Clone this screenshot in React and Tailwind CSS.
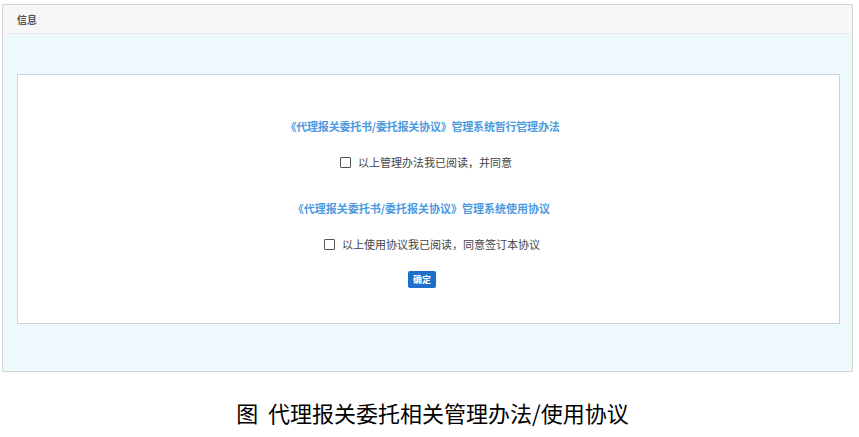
export default function App() {
  const font = { fontFamily: '"Noto Sans CJK SC", "Noto Sans", sans-serif' };
  return (
    <div className="w-[859px] h-[437px] bg-white flex flex-col" style={font}>
      <div className="ml-[2px] mt-[4px] w-[851px] h-[368px] border border-[#d4d4d4] flex flex-col">
        <div className="h-[29px] bg-[#f7f7f7] border-b border-[#ececec] flex items-center pl-[14px]">
          <span className="text-[10px] font-bold text-[#555]">信息</span>
        </div>
        <div className="flex-1 bg-[#eef9fe] pt-[40px] pl-[14px] pr-[12px]">
          <div className="h-[250px] bg-white border border-[#cfd4d8] flex flex-col items-center pt-[43px]">
            <div className="text-[11px] leading-[16px] font-bold text-[#4d9ae0] ml-[-12px] tracking-[-0.2px]">
              《代理报关委托书/委托报关协议》管理系统暂行管理办法
            </div>
            <label className="mt-[20px] flex items-center gap-[7px] text-[11px] leading-[16px] text-[#444] ml-[-5px]">
              <span className="w-[11px] h-[11px] border border-[#555] rounded-[1px] bg-white"></span>
              以上管理办法我已阅读，并同意
            </label>
            <div className="mt-[30px] text-[11px] leading-[16px] font-bold text-[#4d9ae0] ml-[-14px]">
              《代理报关委托书/委托报关协议》管理系统使用协议
            </div>
            <label className="mt-[20px] flex items-center gap-[7px] text-[11px] leading-[16px] text-[#444] ml-[7px]">
              <span className="w-[11px] h-[11px] border border-[#555] rounded-[1px] bg-white"></span>
              以上使用协议我已阅读，同意签订本协议
            </label>
            <button className="mt-[19px] h-[17px] px-[5px] rounded-[2px] bg-[#1e6fcc] text-white text-[9px] font-bold leading-[17px] ml-[-13px]">
              确定
            </button>
          </div>
        </div>
      </div>
      <div className="mt-[27px] text-center text-[22px] leading-[26px] font-normal text-black ml-[6px]">
        图&nbsp;&nbsp;代理报关委托相关管理办法/使用协议
      </div>
    </div>
  );
}
